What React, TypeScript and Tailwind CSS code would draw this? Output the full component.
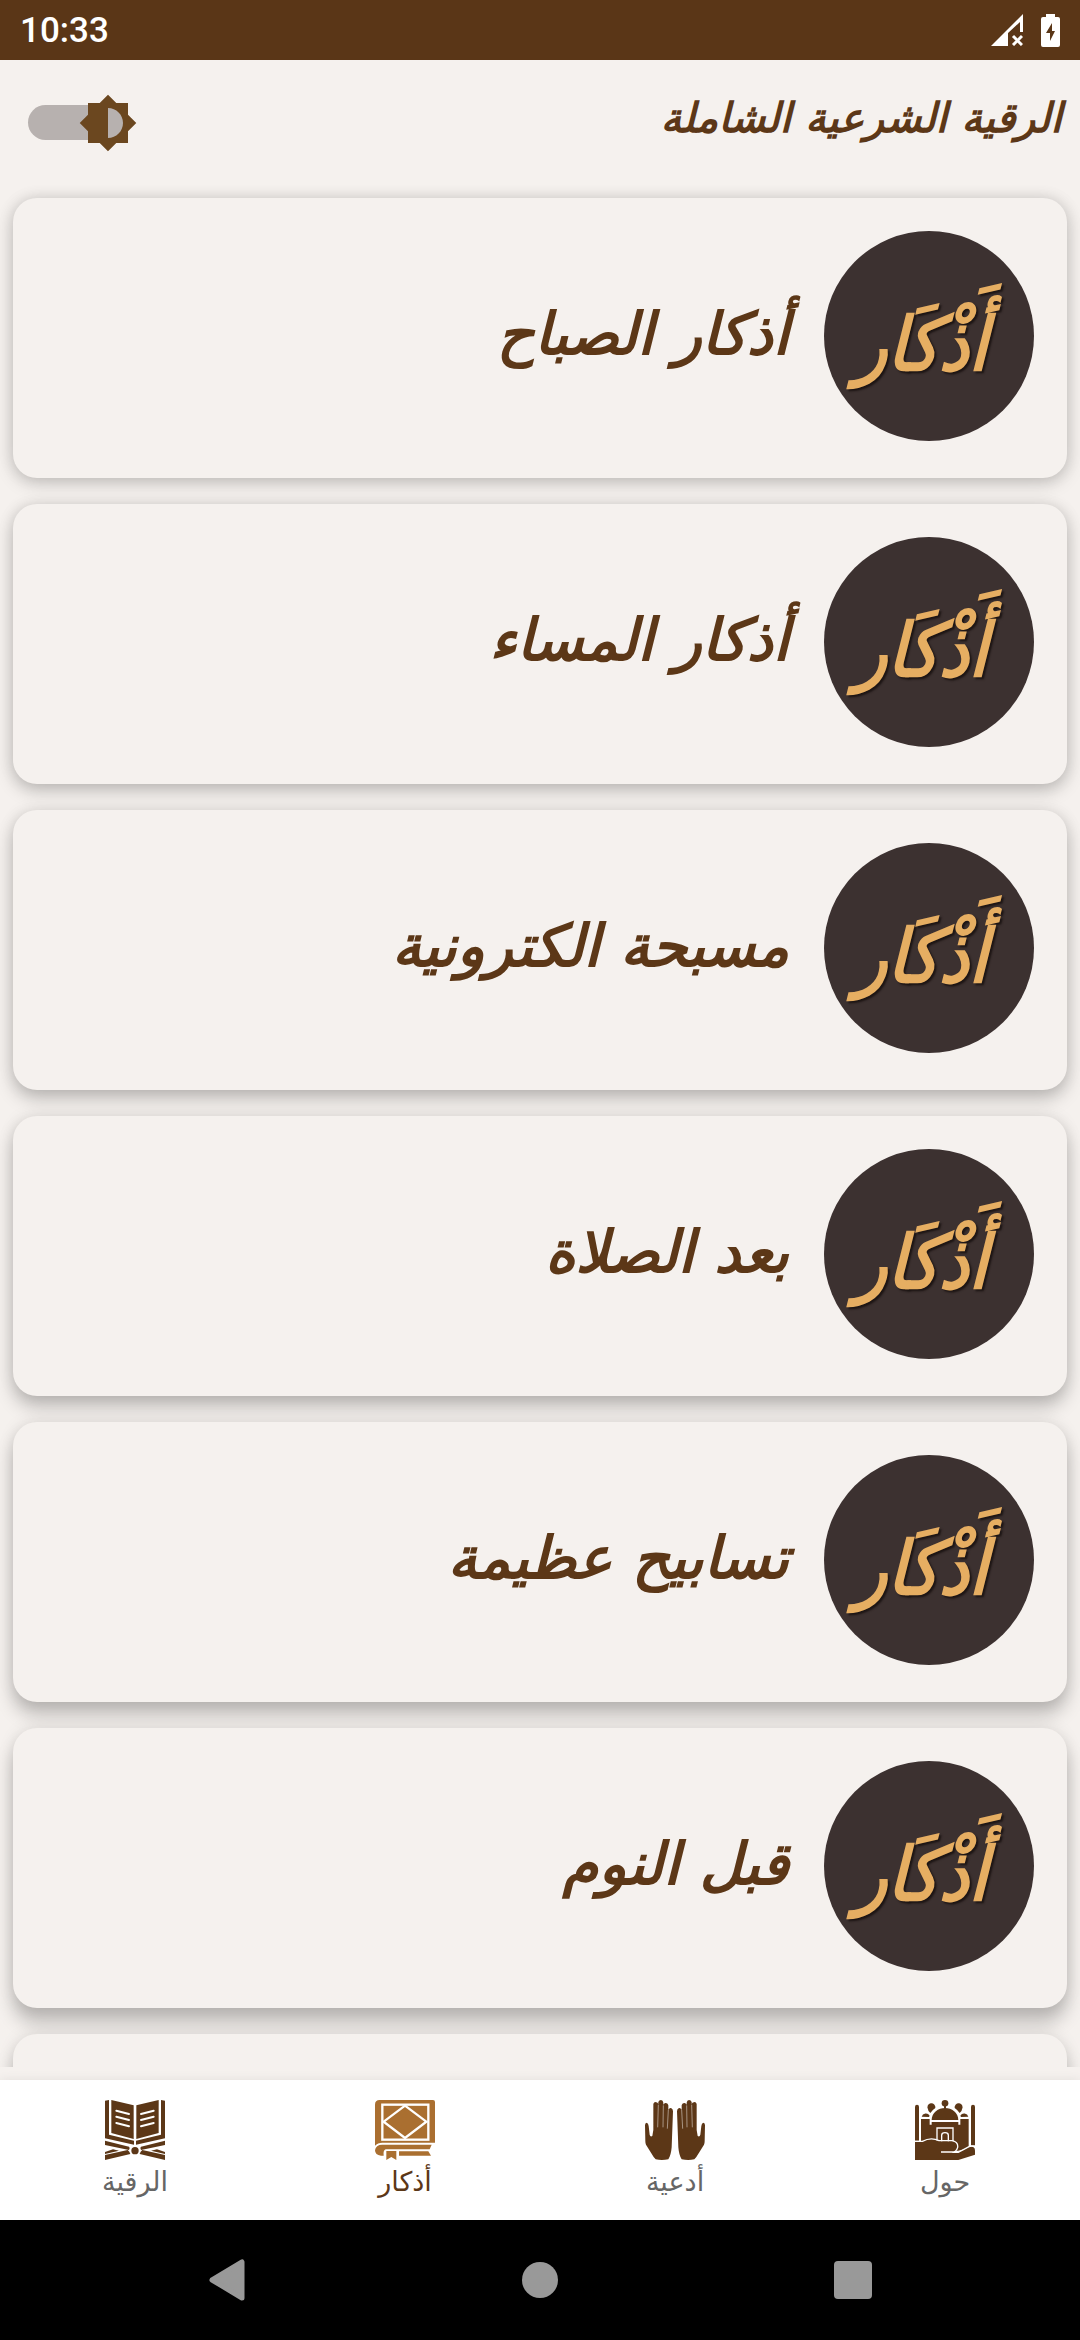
import { useState } from 'react';

type IconProps = { className?: string };

const BookStandIcon = ({ className }: IconProps) => (
  <svg viewBox="0 0 180 180" className={className} aria-hidden="true">
    <g fill="currentColor">
      <path d="M0 2L12 0V104L87 122V134L0 115Z" />
      <path d="M19 0L86 16V117L19 99Z" />
      <path d="M0 122L72 140Q76 143 72 150L0 135Z" />
      <path d="M0 156L24 148L42 152L0 162Z" />
      <path d="M0 165L68 150Q74 155 76 162L0 180Z" />
      <path d="M180 2L168 0V104L93 122V134L180 115Z" />
      <path d="M161 0L94 16V117L161 99Z" />
      <path d="M180 122L108 140Q104 143 108 150L180 135Z" />
      <path d="M180 156L156 148L138 152L180 162Z" />
      <path d="M180 165L112 150Q106 155 104 162L180 180Z" />
      <circle cx="90" cy="152" r="11" />
    </g>
    <g stroke="#fff" strokeWidth="6" strokeLinecap="round">
      <path d="M34 32L72 42M34 50L72 60M34 69L72 79" />
      <path d="M146 32L108 42M146 50L108 60M146 69L108 79" />
    </g>
  </svg>
);

const ClosedBookIcon = ({ className }: IconProps) => (
  <svg viewBox="0 0 180 180" className={className} aria-hidden="true">
    <g fill="currentColor">
      <path d="M14 0H174Q180 0 180 6V128H22Q8 128 0 137V14Q0 0 14 0Z" />
      <path d="M22 134H170L164 148H32Q24 150 26 167H18Q0 165 0 151Q2 134 22 134Z" />
      <path d="M72 154H160L168 167H72Z" />
      <path d="M34 153H64V180L49 171L34 180Z" />
    </g>
    <g fill="none" stroke="#fff">
      <rect x="22" y="14" width="138" height="105" strokeWidth="7" />
      <path d="M90 17L154 65L90 114L26 65Z" strokeWidth="7" />
    </g>
  </svg>
);

const Hand = () => (
  <path d="M0 76Q0 68 5 68Q10 69 11 78L14 104Q16 112 22 108L25 90V12Q26 6 32 6Q39 7 40 12V6Q42 0 48 0Q54 1 55 8V14Q58 8 63 9Q69 10 70 16V30Q73 23 78 24Q84 26 84 34L80 142Q78 166 70 178Q50 182 32 178Q26 172 18 158L3 134Q1 130 1 124Z" />
);

const HandsIcon = ({ className }: IconProps) => (
  <svg viewBox="0 0 180 180" className={className} aria-hidden="true">
    <g fill="currentColor">
      <Hand />
      <g transform="translate(180 0) scale(-1 1)">
        <Hand />
      </g>
    </g>
    <g stroke="#fff" strokeWidth="2" opacity="0.7">
      <path d="M40 14L38 82M55 16L54 82M70 30L67 86" />
      <path d="M140 14L142 82M125 16L126 82M110 30L113 86" />
    </g>
  </svg>
);

const MosqueIcon = ({ className }: IconProps) => (
  <svg viewBox="0 0 180 180" className={className} aria-hidden="true">
    <g fill="currentColor">
      <path d="M0 20Q0 14 6 14Q12 14 12 20V122H0Z" />
      <path d="M168 20Q168 14 174 14Q180 14 180 20V136H168Z" />
      <circle cx="90" cy="10" r="10" />
      <rect x="87" y="16" width="6" height="10" />
      <path d="M50 60C50 38 70 24 90 24S130 38 130 60Z" />
      <path d="M39 28A12 12 0 1 1 61 24Q52 30 46 39Q39 35 39 28Z" />
      <path d="M141 28A12 12 0 1 0 119 24Q128 30 134 39Q141 35 141 28Z" />
      <path d="M20 50A13 13 0 0 1 44 47L42 51Z" />
      <path d="M160 50A13 13 0 0 0 136 47L138 51Z" />
      <path d="M18 57H44V74H50V66H130V74H136V57H161V145L130 152H18Z" />
    </g>
    <g fill="none" stroke="#fff" strokeWidth="4">
      <path d="M66 126V84H114V126" />
      <path d="M80 126V106Q80 98 90 98Q100 98 100 106V126" />
    </g>
    <path d="M0 126H24Q48 112 72 124H114Q128 126 126 142Q124 154 114 156H130L164 140Q180 138 180 152V164L130 180H0Z" fill="currentColor" />
    <path d="M0 124H22Q48 110 72 122H112Q130 126 128 142Q124 156 112 156H78M112 157H130L162 140Q174 136 180 142" fill="none" stroke="#fff" strokeWidth="4" />
  </svg>
);

// the lower a card sits on the screen, the longer its shadow
const cards = [
  { title: 'أذكار الصباح', shadow: 'shadow-[0_5px_18px_rgba(0,0,0,0.18),0_0_16px_rgba(0,0,0,0.10)]' },
  { title: 'أذكار المساء', shadow: 'shadow-[0_7px_18px_rgba(0,0,0,0.20),0_0_16px_rgba(0,0,0,0.10)]' },
  { title: 'مسبحة الكترونية', shadow: 'shadow-[0_9px_18px_rgba(0,0,0,0.21),0_0_16px_rgba(0,0,0,0.10)]' },
  { title: 'بعد الصلاة', shadow: 'shadow-[0_11px_18px_rgba(0,0,0,0.22),0_0_16px_rgba(0,0,0,0.10)]' },
  { title: 'تسابيح عظيمة', shadow: 'shadow-[0_13px_18px_rgba(0,0,0,0.22),0_0_16px_rgba(0,0,0,0.10)]' },
  { title: 'قبل النوم', shadow: 'shadow-[0_15px_18px_rgba(0,0,0,0.22),0_0_16px_rgba(0,0,0,0.10)]' },
];

const tabs = [
  { id: 'about', label: 'حول', Icon: MosqueIcon },
  { id: 'duas', label: 'أدعية', Icon: HandsIcon },
  { id: 'azkar', label: 'أذكار', Icon: ClosedBookIcon },
  { id: 'ruqyah', label: 'الرقية', Icon: BookStandIcon },
];

const StatusBar = () => (
  <div dir="ltr" className="flex h-[60px] shrink-0 items-center justify-between bg-[#5a3617] px-5 text-white">
    <span className="font-[Roboto,sans-serif] text-[35px] font-medium leading-none">10:33</span>
    <div className="flex items-center gap-[18px]">
      <svg viewBox="0 0 32 32" className="h-8 w-8" aria-hidden="true">
        <path d="M0 32L32 0V18H29V8L17 19V32Z" fill="#fff" />
        <path d="M22 22L31 31M31 22L22 31" stroke="#fff" strokeWidth="3" />
      </svg>
      <svg viewBox="0 0 19 33" className="h-[33px] w-[19px]" aria-hidden="true">
        <path d="M5 0H14V3H17Q19 3 19 5V31Q19 33 17 33H2Q0 33 0 31V5Q0 3 2 3H5Z" fill="#fff" />
        <path d="M11 9L5 19H9V27L14 17H11Z" fill="#5a3617" />
      </svg>
    </div>
  </div>
);

const Badge = () => (
  <div className="flex size-[210px] shrink-0 items-center justify-center rounded-full bg-[#3c3130] pt-4">
    <span className="pr-4 font-['DejaVu_Sans_Condensed','DejaVu_Sans',sans-serif] text-[74px] font-bold italic leading-none text-[#e6ae62] [text-shadow:2px_2px_2px_#1d1514]">
      أَذْكَار
    </span>
  </div>
);

const App: React.FC = () => {
  const [dark, setDark] = useState(false);
  const [active, setActive] = useState('azkar');

  return (
    <div
      dir="rtl"
      className="flex h-screen flex-col overflow-hidden bg-[#f5f1ee] font-['DejaVu_Sans',sans-serif] text-[#5c3717]"
    >
      <StatusBar />

      <header className="flex h-[125px] shrink-0 items-center justify-between pl-7 pr-[18px]">
        <h1 className="pb-2 text-[41px] font-bold italic leading-none">الرقية الشرعية الشاملة</h1>
        <label dir="ltr" className="relative flex h-[60px] w-[110px] items-center">
          <input
            type="checkbox"
            aria-label="الوضع الليلي"
            checked={dark}
            onChange={(e) => setDark(e.target.checked)}
            className="h-[35px] w-[96px] appearance-none rounded-full bg-[#b7b1af]"
          />
          <svg viewBox="0 0 24 24" className="pointer-events-none absolute left-[50px] top-0 size-[60px]" aria-hidden="true">
            <path
              fill="#6b471f"
              d="M20 15.31L23.31 12 20 8.69V4h-4.69L12 .69 8.69 4H4v4.69L.69 12 4 15.31V20h4.69L12 23.31 15.31 20H20v-4.69zM12 18V6c3.31 0 6 2.69 6 6s-2.69 6-6 6z"
            />
          </svg>
        </label>
      </header>

      <main className="mb-[13px] flex min-h-0 flex-1 flex-col gap-[26px] overflow-hidden p-[13px]">
        {cards.map((card) => (
          <button
            key={card.title}
            className={`flex h-[280px] shrink-0 items-center gap-[35px] rounded-3xl bg-[#f5f1ee] px-[33px] pb-1 ${card.shadow}`}
          >
            <Badge />
            <span className="pb-1 text-[58px] font-bold italic leading-none">{card.title}</span>
          </button>
        ))}
        {/* placeholder for the next card */}
        <div className="h-[280px] shrink-0 rounded-3xl bg-[#f5f1ee] shadow-[0_15px_18px_rgba(0,0,0,0.22),0_0_16px_rgba(0,0,0,0.10)]" />
      </main>

      <nav className="grid h-[140px] shrink-0 grid-cols-4 bg-white shadow-[0_0_10px_rgba(0,0,0,0.08)]">
        {tabs.map(({ id, label, Icon }) => (
          <button key={id} onClick={() => setActive(id)} className="flex flex-col items-center gap-1 pt-5">
            <Icon className={active === id ? 'size-[60px] text-[#aa6f30]' : 'size-[60px] text-[#5c3717]'} />
            <span className={active === id ? 'text-[27px] leading-9' : 'text-[27px] leading-9 text-[#666]'}>
              {label}
            </span>
          </button>
        ))}
      </nav>

      <div dir="ltr" className="grid h-[120px] shrink-0 grid-cols-3 place-items-center bg-black px-[70px]">
        <button aria-label="رجوع">
          <svg viewBox="0 0 36 42" className="h-[42px] w-9">
            <path d="M3 21L33 3V39Z" fill="#999" stroke="#999" strokeWidth="5" strokeLinejoin="round" />
          </svg>
        </button>
        <button aria-label="الرئيسية" className="size-9 rounded-full bg-[#999]" />
        <button aria-label="التطبيقات" className="size-[38px] rounded-sm bg-[#999]" />
      </div>
    </div>
  );
};

export default App;
